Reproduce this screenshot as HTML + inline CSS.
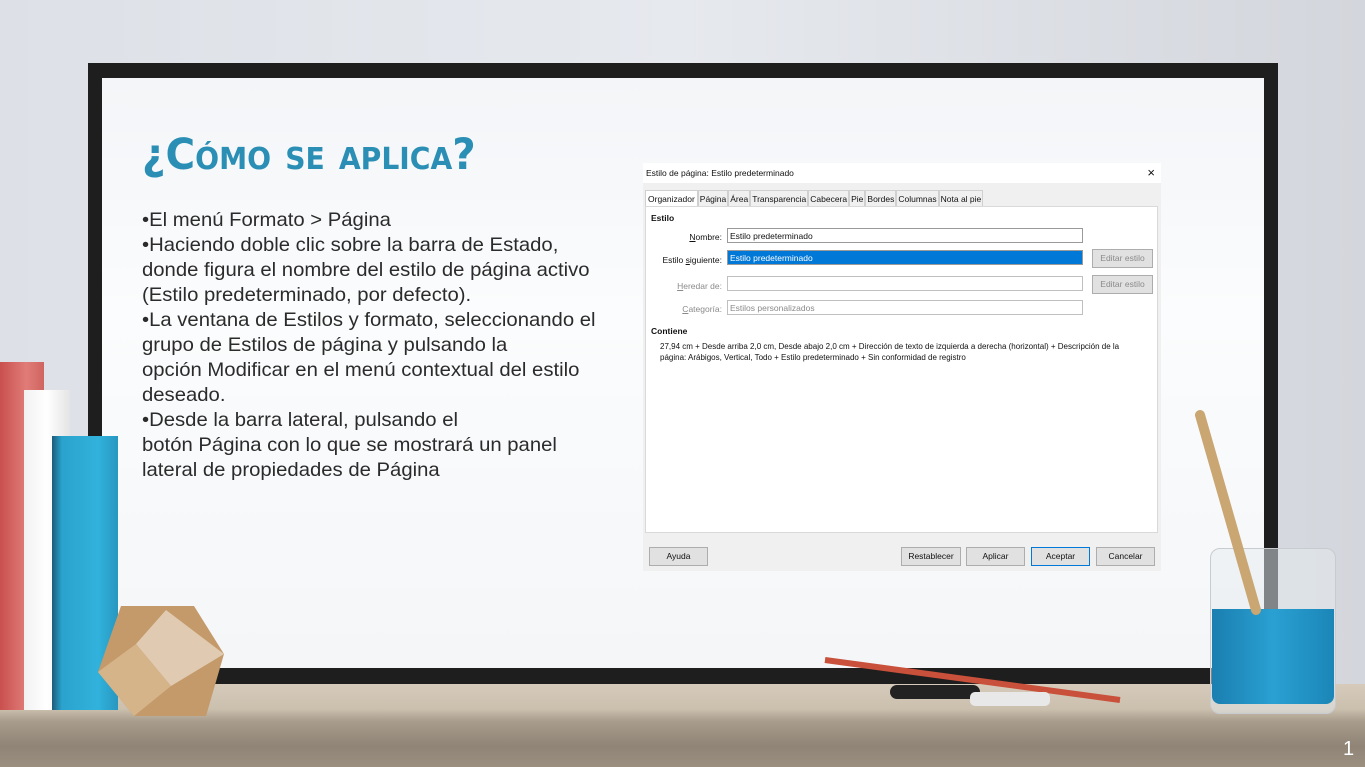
<!DOCTYPE html>
<html><head><meta charset="utf-8"><style>
*{margin:0;padding:0;box-sizing:border-box}
body{width:1365px;height:767px;overflow:hidden;position:relative;background:linear-gradient(90deg,#dde1e7,#e6e9ee 50%,#d3d6dc);font-family:"Liberation Sans",sans-serif}
.abs{position:absolute}
.frame{left:88px;top:63px;width:1190px;height:622px;background:#1e1e1e}
.board{left:102px;top:78px;width:1162px;height:590px;background:linear-gradient(180deg,#f3f5f8,#fbfcfd 40%,#f4f6f8)}
.table{left:0;top:684px;width:1365px;height:83px;background:linear-gradient(180deg,#d6cbbb 0,#cbbfae 30%,#a89c8c 45%,#8f8476 75%,#9b8f80 100%)}
h1{position:absolute;left:142px;top:130px;font-size:43px;color:#2b8fb5;font-weight:bold;font-variant:small-caps;font-family:"DejaVu Sans","Liberation Sans",sans-serif;transform:scaleX(.94);transform-origin:left}
.body{left:142px;top:208px;font-size:19.5px;line-height:25px;color:#2b2b2b;font-family:"Liberation Sans",sans-serif;white-space:nowrap;transform:scaleX(1.04);transform-origin:left}
.dlg{left:643px;top:163px;width:518px;height:408px;background:#f0f0f0;font-size:8.5px;color:#111}
.tb{left:0;top:0;width:518px;height:20px;background:#fff;padding:5px 3px}
.tabs{left:2px;top:27px;height:16px;display:flex;font-size:8.5px}
.tabs span{border:1px solid #d0d0d0;border-bottom:none;padding:3px 1px;background:#f0f0f0;height:16px}
.tabs span.a{background:#fff;padding:3px 2px}
.pnl{left:2px;top:43px;width:513px;height:327px;background:#fff;border:1px solid #d9d9d9}
.in{border:1px solid #9a9a9a;height:15px;background:#fff;padding:2px 2px}
.btn{border:1px solid #adadad;background:#e1e1e1;height:19px;text-align:center;line-height:17px}
.lbl{text-align:right;width:76px}
.g{color:#8a8a8a}
</style></head><body>
<div class="abs frame"></div>
<div class="abs board"></div>
<div class="abs table"></div>
<div class="abs" style="left:0;top:362px;width:44px;height:348px;background:linear-gradient(90deg,#c9504e,#e07c78 60%,#d06460)"></div>
<div class="abs" style="left:24px;top:390px;width:46px;height:320px;background:linear-gradient(90deg,#f2f2f2,#fff 50%,#e4e4e4)"></div>
<div class="abs" style="left:52px;top:436px;width:66px;height:274px;background:linear-gradient(90deg,#1e5a7a,#2aa3cd 15%,#31b2dc 70%,#2797c0)"></div>
<svg class="abs" style="left:96px;top:604px" width="130" height="140"><polygon points="25,2 98,2 128,50 110,112 38,112 2,68" fill="#c49a6a"/><polygon points="70,6 128,50 75,82 40,40" fill="#e0cbb2"/><polygon points="2,68 40,40 75,82 38,112" fill="#d6b48a"/></svg>
<div class="abs" style="left:1210px;top:548px;width:126px;height:166px;border-radius:10px;background:rgba(230,235,240,.5);border:1px solid #c8ccd0"></div>
<div class="abs" style="left:1212px;top:609px;width:122px;height:95px;background:linear-gradient(90deg,#1a7eb0,#2aa0d2 50%,#1b86b8);border-radius:0 0 8px 8px"></div>
<svg class="abs" style="left:1190px;top:410px" width="80" height="210"><line x1="10" y1="5" x2="66" y2="200" stroke="#c9a672" stroke-width="10" stroke-linecap="round"/></svg>
<svg class="abs" style="left:820px;top:650px" width="310" height="60"><line x1="5" y1="10" x2="300" y2="50" stroke="#c9503a" stroke-width="6"/><rect x="70" y="35" width="90" height="14" rx="7" fill="#222"/><rect x="150" y="42" width="80" height="14" rx="5" fill="#e8e8e8"/></svg>
<div class="abs" style="left:1343px;top:738px;color:#fff;font-size:20px">1</div>
<h1>¿Cómo se aplica?</h1>
<div class="abs body">•El menú Formato &gt; Página<br>•Haciendo doble clic sobre la barra de Estado,<br>donde figura el nombre del estilo de página activo<br>(Estilo predeterminado, por defecto).<br>•La ventana de Estilos y formato, seleccionando el<br>grupo de Estilos de página y pulsando la<br>opción Modificar en el menú contextual del estilo<br>deseado.<br>•Desde la barra lateral, pulsando el<br>botón Página con lo que se mostrará un panel<br>lateral de propiedades de Página</div>
<div class="abs dlg">
<div class="abs tb">Estilo de página: Estilo predeterminado<span style="position:absolute;right:6px;top:2px;font-size:13px">×</span></div>
<div class="abs tabs"><span class="a">Organizador</span><span>Página</span><span>Área</span><span>Transparencia</span><span>Cabecera</span><span>Pie</span><span>Bordes</span><span>Columnas</span><span>Nota al pie</span></div>
<div class="abs pnl">
<div class="abs" style="left:5px;top:6px;font-weight:bold">Estilo</div>
<div class="abs lbl" style="left:0;top:25px"><u>N</u>ombre:</div>
<div class="abs in" style="left:81px;top:21px;width:356px">Estilo predeterminado</div>
<div class="abs lbl" style="left:0;top:48px">Estilo <u>s</u>iguiente:</div>
<div class="abs in" style="left:81px;top:43px;width:356px;background:#0078d7;color:#fff">Estilo predeterminado</div>
<div class="abs btn g" style="left:446px;top:42px;width:61px">Editar estilo</div>
<div class="abs lbl g" style="left:0;top:74px"><u>H</u>eredar de:</div>
<div class="abs in" style="left:81px;top:69px;width:356px;border-color:#c0c0c0"></div>
<div class="abs btn g" style="left:446px;top:68px;width:61px">Editar estilo</div>
<div class="abs lbl g" style="left:0;top:97px"><u>C</u>ategoría:</div>
<div class="abs in g" style="left:81px;top:93px;width:356px;border-color:#c0c0c0">Estilos personalizados</div>
<div class="abs" style="left:5px;top:119px;font-weight:bold">Contiene</div>
<div class="abs" style="left:14px;top:134px;width:482px;line-height:11px;font-size:8px">27,94 cm + Desde arriba 2,0 cm, Desde abajo 2,0 cm + Dirección de texto de izquierda a derecha (horizontal) + Descripción de la página: Arábigos, Vertical, Todo + Estilo predeterminado + Sin conformidad de registro</div>
</div>
<div class="abs btn" style="left:6px;top:384px;width:59px">Ayuda</div>
<div class="abs btn" style="left:258px;top:384px;width:60px">Restablecer</div>
<div class="abs btn" style="left:323px;top:384px;width:59px">Aplicar</div>
<div class="abs btn" style="left:388px;top:384px;width:59px;border-color:#0078d7">Aceptar</div>
<div class="abs btn" style="left:453px;top:384px;width:59px">Cancelar</div>
</div>
</body></html>
